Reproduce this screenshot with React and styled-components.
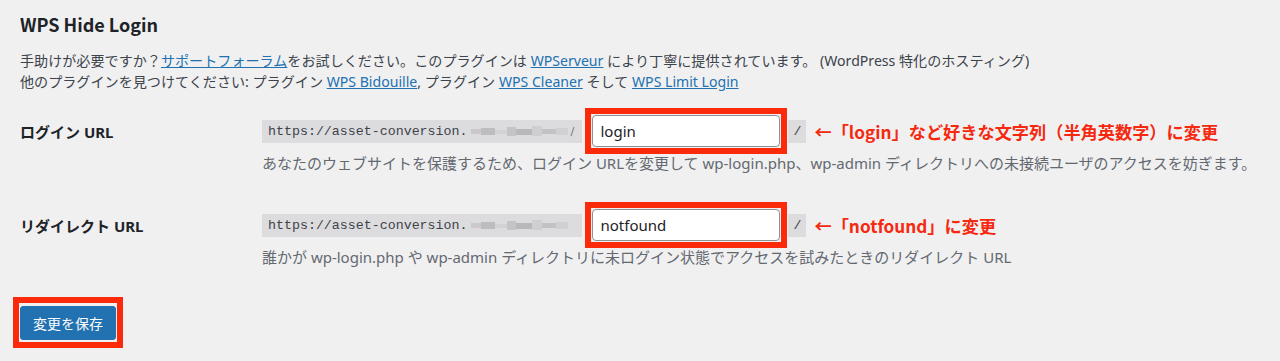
import styled, { createGlobalStyle } from "styled-components";

const GlobalStyle = createGlobalStyle`
  body {
    margin: 0;
    background: #f0f0f1;
    font-family: "Noto Sans", "Noto Sans CJK JP", sans-serif;
    color: #3c434a;
  }
`;

const Wrap = styled.div`
  padding: 12px 20px 14px 20px;
`;
const Title = styled.h1`
  margin: 0;
  font-family: "Noto Sans CJK JP", "Noto Sans", sans-serif;
  font-size: 18px;
  line-height: 24px;
  font-weight: 700;
  color: #1d2327;
`;
const Intro = styled.p`
  margin: 14px 0 0 0;
  font-size: 14.1px;
  line-height: 21px;
`;
const Link = styled.a`
  color: #2271b1;
  text-decoration: underline;
`;
const Table = styled.div`
  margin-top: 16px;
  display: flex;
  flex-direction: column;
  gap: 28px;
`;
const Row = styled.div`
  display: grid;
  grid-template-columns: 242px 1fr;
`;
const Label = styled.div`
  height: 46px;
  display: flex;
  align-items: center;
  font-size: 15px;
  font-weight: 700;
  color: #1d2327;
`;
const Field = styled.div`
  display: flex;
  flex-direction: column;
`;
const Line = styled.div`
  height: 46px;
  display: flex;
  align-items: center;
`;
const Code = styled.code`
  display: inline-flex;
  align-items: center;
  height: 23px;
  padding: 0 5px 0 6px;
  background: #dcdcde;
  font-family: "Liberation Mono", "DejaVu Sans Mono", monospace;
  font-size: 13.3px;
  color: #3c434a;
  margin-left: ${(p) => p.$gap || 0}px;
`;
const Mosaic = styled.svg`
  display: block;
  margin-left: 3px;
`;
const Mark = styled.span`
  display: inline-flex;
  border: 6px solid #fa2a0a;
  padding: 1px;
  margin-left: ${(p) => p.$gap || 0}px;
`;
const Input = styled.input`
  box-sizing: border-box;
  width: 188px;
  height: 32px;
  border: 1px solid #8c8f94;
  border-radius: 4px;
  background: #fff;
  padding: 0 8px;
  font-family: "Noto Sans", "Noto Sans CJK JP", sans-serif;
  font-size: 15px;
  color: #1d2327;
  outline: none;
`;
const Note = styled.span`
  margin-left: 8px;
  font-family: "Noto Sans CJK JP", "Noto Sans", sans-serif;
  font-size: 17.2px;
  font-weight: 700;
  color: #f5290f;
  white-space: nowrap;
`;
const Desc = styled.p`
  margin: -1px 0 0 0;
  font-size: 15px;
  line-height: 21px;
  color: #646970;
  white-space: nowrap;
`;
const SaveMark = styled.div`
  display: inline-flex;
  margin: 29px 0 0 -7px;
  border: 6px solid #fa2a0a;
  padding: 3px 1px 2px 1px;
`;
const Button = styled.button`
  height: 34px;
  padding: 0 12px;
  border: 1px solid #2271b1;
  border-radius: 3px;
  background: #2271b1;
  color: #fff;
  font-family: "Noto Sans CJK JP", "Noto Sans", sans-serif;
  font-size: 14px;
  cursor: pointer;
`;

const blocks = [
  ["#c9c9cb", 0, 6, 10, 5],
  ["#bdbdbf", 10, 5, 14, 7],
  ["#d2d2d4", 24, 7, 12, 4],
  ["#c4c4c6", 36, 4, 9, 9],
  ["#b8b8ba", 45, 6, 16, 6],
  ["#cfcfd1", 61, 3, 10, 10],
  ["#c2c2c4", 71, 6, 14, 5],
  ["#d0d0d2", 85, 5, 12, 7],
];

function Blur({ slash }) {
  return (
    <Mosaic width="106" height="17" viewBox="0 0 106 17">
      {blocks.map(([c, x, y, w, h], i) => (
        <rect key={i} x={x} y={y} width={w} height={h} fill={c} />
      ))}
      {slash && <path d="M100 13 L103 4" stroke="#8a8c90" strokeWidth="1.2" />}
    </Mosaic>
  );
}

function UrlRow({ label, value, note, desc, slash }) {
  return (
    <Row>
      <Label>{label}</Label>
      <Field>
        <Line>
          <Code>
            https://asset-conversion.
            <Blur slash={slash} />
          </Code>
          <Mark $gap={3}>
            <Input defaultValue={value} />
          </Mark>
          <Code $gap={1}>/</Code>
          <Note>{note}</Note>
        </Line>
        <Desc>{desc}</Desc>
      </Field>
    </Row>
  );
}

export default function App() {
  return (
    <Wrap>
      <GlobalStyle />
      <Title>WPS Hide Login</Title>
      <Intro>
        手助けが必要ですか？<Link href="#">サポートフォーラム</Link>
        をお試しください。このプラグインは <Link href="#">WPServeur</Link>{" "}
        により丁寧に提供されています。 (WordPress 特化のホスティング)
        <br />
        他のプラグインを見つけてください: プラグイン{" "}
        <Link href="#">WPS Bidouille</Link>, プラグイン{" "}
        <Link href="#">WPS Cleaner</Link> そして{" "}
        <Link href="#">WPS Limit Login</Link>
      </Intro>
      <Table>
        <UrlRow
          label="ログイン URL"
          value="login"
          slash
          note="←「login」など好きな文字列（半角英数字）に変更"
          desc="あなたのウェブサイトを保護するため、ログイン URLを変更して wp-login.php、wp-admin ディレクトリへの未接続ユーザのアクセスを妨ぎます。"
        />
        <UrlRow
          label="リダイレクト URL"
          value="notfound"
          note="←「notfound」に変更"
          desc="誰かが wp-login.php や wp-admin ディレクトリに未ログイン状態でアクセスを試みたときのリダイレクト URL"
        />
      </Table>
      <SaveMark>
        <Button>変更を保存</Button>
      </SaveMark>
    </Wrap>
  );
}
